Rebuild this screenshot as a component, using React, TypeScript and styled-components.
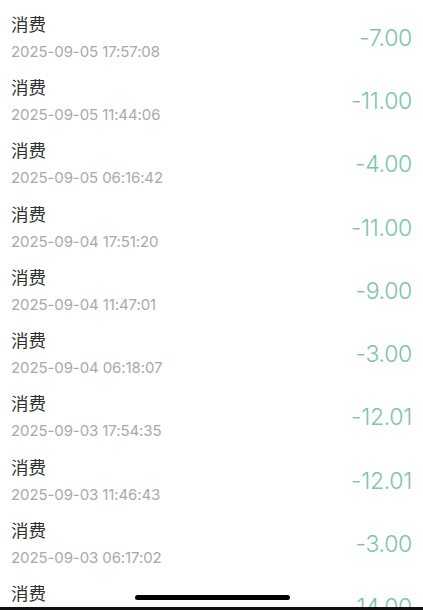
import React from 'react';
import styled, {createGlobalStyle} from 'styled-components';

const GlobalStyle = createGlobalStyle`
	html, body {
		margin: 0;
		padding: 0;
		background: #ffffff;
	}
	body {
		font-family: Inter, "Noto Sans CJK SC", sans-serif;
	}
`;

const Screen = styled.div`
	position: relative;
	width: 423px;
	height: 610px;
	display: flex;
	flex-direction: column;
	background: #ffffff;
	overflow: hidden;
`;
const List = styled.div`
	flex: 1;
	overflow: hidden;
	padding-top: 6px;
`;
const Row = styled.div`
	height: 63.3px;
	box-sizing: border-box;
	display: flex;
	align-items: center;
	justify-content: space-between;
	padding: 0 11px;
`;
const Info = styled.div`
	display: flex;
	flex-direction: column;
	gap: 6px;
`;
const Title = styled.div`
	font-family: "Noto Sans CJK SC", sans-serif;
	font-size: 17.5px;
	line-height: 22px;
	color: #2f2f2f;
`;
const Time = styled.div`
	font-size: 15px;
	line-height: 22px;
	color: #a9a9a9;
	letter-spacing: -0.1px;
`;
const Amount = styled.div`
	font-size: 23px;
	font-weight: 300;
	color: #7ec4a6;
	letter-spacing: -0.3px;
`;
const BottomEdge = styled.div`
	height: 3px;
	background: #111111;
`;
const HomeIndicator = styled.div`
	position: absolute;
	left: 135px;
	bottom: 10px;
	width: 155px;
	height: 5px;
	border-radius: 3px;
	background: #000000;
`;

type record = {
	time: string
	amount: string
}

const records: record[] = [
	{time: '2025-09-05 17:57:08', amount: '-7.00'},
	{time: '2025-09-05 11:44:06', amount: '-11.00'},
	{time: '2025-09-05 06:16:42', amount: '-4.00'},
	{time: '2025-09-04 17:51:20', amount: '-11.00'},
	{time: '2025-09-04 11:47:01', amount: '-9.00'},
	{time: '2025-09-04 06:18:07', amount: '-3.00'},
	{time: '2025-09-03 17:54:35', amount: '-12.01'},
	{time: '2025-09-03 11:46:43', amount: '-12.01'},
	{time: '2025-09-03 06:17:02', amount: '-3.00'},
	{time: '2025-09-02 17:50:11', amount: '-14.00'},
];

function App() {
	return (
		<Screen>
			<GlobalStyle />
			<List>
				{records.map((r, i) => (
					<Row key={i}>
						<Info>
							<Title>消费</Title>
							<Time>{r.time}</Time>
						</Info>
						<Amount>{r.amount}</Amount>
					</Row>
				))}
			</List>
			<BottomEdge />
			<HomeIndicator />
		</Screen>
	);
}

export default App;
